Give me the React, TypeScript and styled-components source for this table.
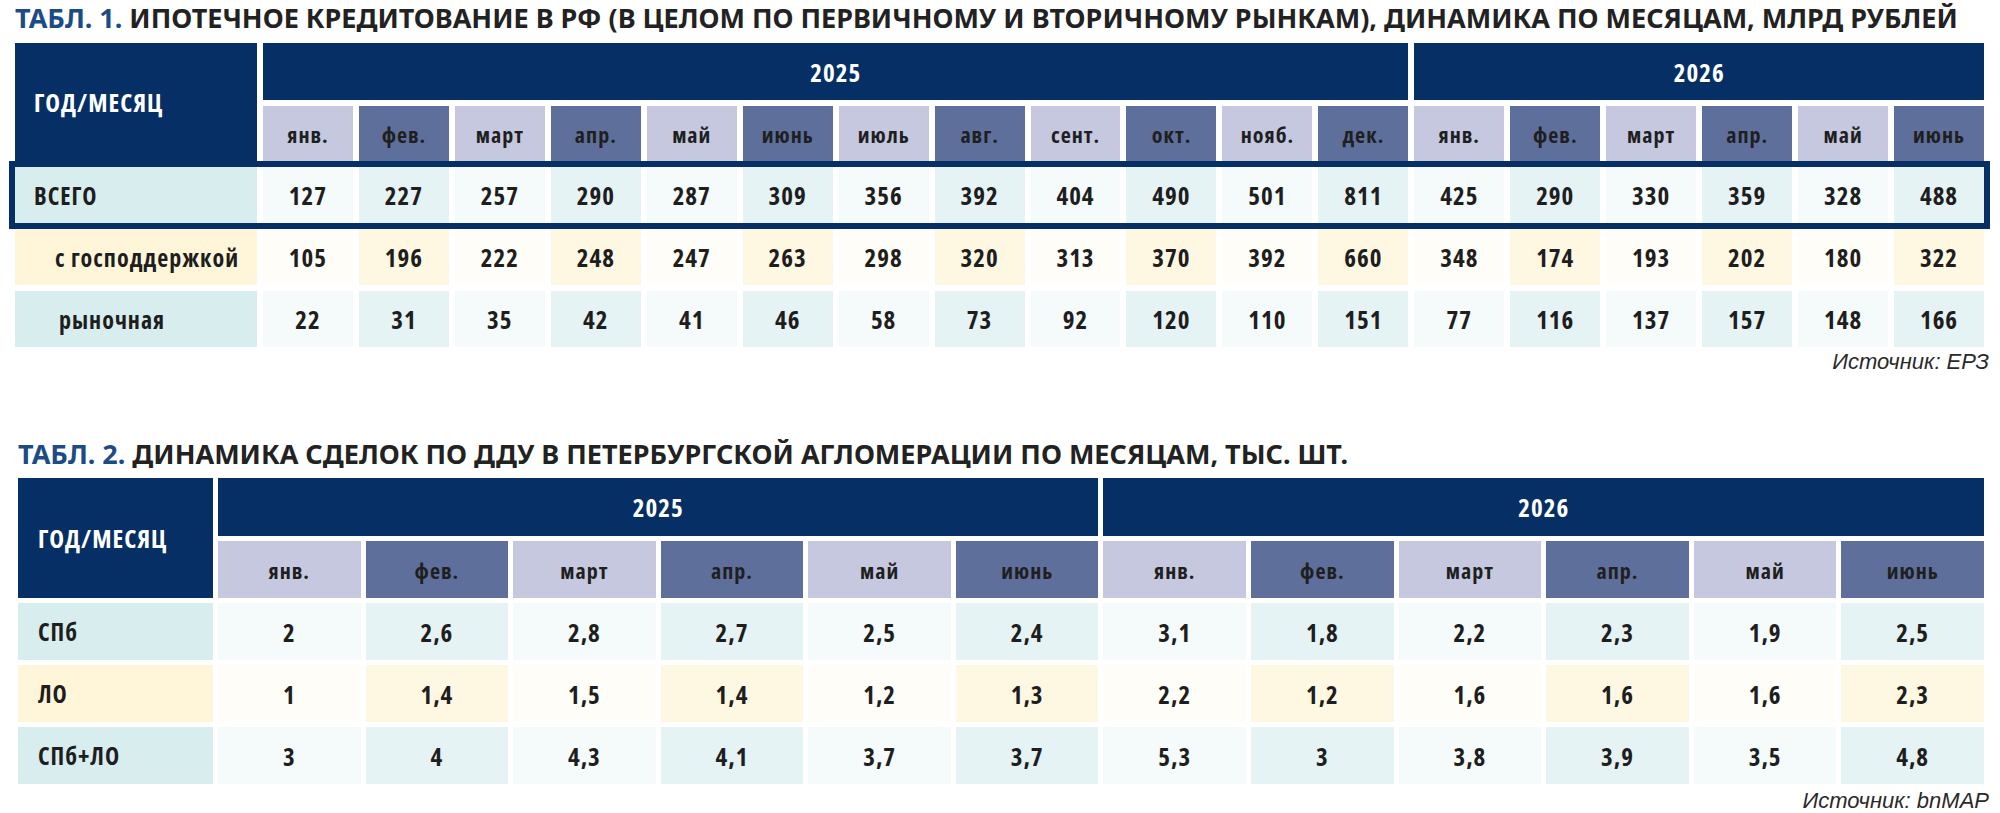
import React from 'react'
import styled, { createGlobalStyle } from 'styled-components'

const GlobalStyle = createGlobalStyle`
  html, body { margin: 0; padding: 0; background: #ffffff; }
  body { font-family: "Noto Sans", "DejaVu Sans", sans-serif; color: #1e1e1e; }
`

const NAVY = '#052f65'
// узкий шрифт ячеек (Open Sans Condensed + трекинг)
const CELL_FONT = '"Open Sans", "Noto Sans", sans-serif'

// данные таблиц
const months2025 = ['янв.', 'фев.', 'март', 'апр.', 'май', 'июнь', 'июль', 'авг.', 'сент.', 'окт.', 'нояб.', 'дек.']
const months2026 = ['янв.', 'фев.', 'март', 'апр.', 'май', 'июнь']

const mortgageRows = [
  { label: 'ВСЕГО', tone: 'teal', pad: 19, highlight: true, values: [127, 227, 257, 290, 287, 309, 356, 392, 404, 490, 501, 811, 425, 290, 330, 359, 328, 488] },
  { label: 'с господдержкой', tone: 'yellow', pad: 40, highlight: false, values: [105, 196, 222, 248, 247, 263, 298, 320, 313, 370, 392, 660, 348, 174, 193, 202, 180, 322] },
  { label: 'рыночная', tone: 'teal', pad: 44, highlight: false, values: [22, 31, 35, 42, 41, 46, 58, 73, 92, 120, 110, 151, 77, 116, 137, 157, 148, 166] },
]

const dealRows = [
  { label: 'СПб', tone: 'teal', pad: 20, highlight: false, values: ['2', '2,6', '2,8', '2,7', '2,5', '2,4', '3,1', '1,8', '2,2', '2,3', '1,9', '2,5'] },
  { label: 'ЛО', tone: 'yellow', pad: 20, highlight: false, values: ['1', '1,4', '1,5', '1,4', '1,2', '1,3', '2,2', '1,2', '1,6', '1,6', '1,6', '2,3'] },
  { label: 'СПб+ЛО', tone: 'teal', pad: 20, highlight: false, values: ['3', '4', '4,3', '4,1', '3,7', '3,7', '5,3', '3', '3,8', '3,9', '3,5', '4,8'] },
]

type Tone = 'teal' | 'yellow'

const labelBg: Record<Tone, string> = { teal: '#d8edee', yellow: '#fff6da' }
const cellBg: Record<Tone, [string, string]> = {
  teal: ['#f5fafb', '#e6f3f4'],
  yellow: ['#fffdf7', '#fef8e3'],
}

const Page = styled.div`
  display: flex;
  flex-direction: column;
  padding: 1px 11px 0 15px;
  width: 2000px;
  box-sizing: border-box;
`

const Section = styled.section<{ $shift: number; $top: number }>`
  display: flex;
  flex-direction: column;
  margin-left: ${(p) => p.$shift}px;
  margin-top: ${(p) => p.$top}px;
`

const Title = styled.h2`
  margin: 0;
  font-size: 27px;
  line-height: 34px;
  font-weight: 700;
  color: #222222;
  white-space: nowrap;
`

const TitleNo = styled.span`
  color: #1c4b86;
`

const Table = styled.div<{ $gap: number; $top: number }>`
  display: flex;
  flex-direction: column;
  gap: ${(p) => p.$gap}px;
  margin-top: ${(p) => p.$top}px;
  margin-right: 5px;
  font-family: ${CELL_FONT};
  font-stretch: condensed;
  letter-spacing: 1px;
`

const Grid = styled.div<{ $label: number; $cols: number; $gap: number }>`
  display: grid;
  grid-template-columns: ${(p) => p.$label}px repeat(${(p) => p.$cols}, minmax(0, 1fr));
  column-gap: ${(p) => p.$gap}px;
`

const HeadGrid = styled(Grid)<{ $rows: string }>`
  grid-template-rows: ${(p) => p.$rows};
  row-gap: ${(p) => p.$gap}px;
`

const HeadLabel = styled.div<{ $pad: number }>`
  grid-row: 1 / span 2;
  background: ${NAVY};
  color: #ffffff;
  font-size: 25px;
  font-weight: 700;
  display: flex;
  align-items: center;
  padding-left: ${(p) => p.$pad}px;
`

const YearCell = styled.div<{ $span: number }>`
  grid-column: span ${(p) => p.$span};
  background: ${NAVY};
  color: #ffffff;
  font-size: 25px;
  font-weight: 700;
  display: flex;
  align-items: center;
  justify-content: center;
`

const MonthCell = styled.div<{ $dark: boolean }>`
  background: ${(p) => (p.$dark ? '#5e6f9c' : '#c5c8de')};
  color: #1f1f1f;
  font-size: 22px;
  font-weight: 700;
  display: flex;
  align-items: center;
  justify-content: center;
`

const DataRow = styled(Grid)<{ $height: number; $highlight: boolean }>`
  height: ${(p) => p.$height}px;
  outline: ${(p) => (p.$highlight ? `6px solid ${NAVY}` : 'none')};
`

const RowLabel = styled.div<{ $tone: Tone; $pad: number }>`
  background: ${(p) => labelBg[p.$tone]};
  font-size: 24px;
  font-weight: 700;
  color: #1e1e1e;
  display: flex;
  align-items: center;
  padding-left: ${(p) => p.$pad}px;
`

const ValueCell = styled.div<{ $tone: Tone; $alt: boolean }>`
  background: ${(p) => cellBg[p.$tone][p.$alt ? 1 : 0]};
  font-size: 25px;
  font-weight: 700;
  color: #1e1e1e;
  display: flex;
  align-items: center;
  justify-content: center;
`

const Source = styled.div<{ $top: number }>`
  margin-top: ${(p) => p.$top}px;
  text-align: right;
  font-family: "Liberation Sans", Arial, sans-serif;
  font-size: 22px;
  line-height: 28px;
  font-style: italic;
  color: #2a2a2a;
`

type Row = { label: string; tone: string; pad: number; highlight: boolean; values: (number | string)[] }

type TableProps = {
  label: number
  gap: number
  headRows: string
  rowHeight: number
  labelPad: number
  top: number
  spans: [number, number]
  rows: Row[]
  months: string[]
}

const DataTable = ({ label, gap, headRows, rowHeight, labelPad, top, spans, rows, months }: TableProps) => (
  <Table $gap={gap} $top={top}>
    <HeadGrid $label={label} $cols={months.length} $gap={gap} $rows={headRows}>
      <HeadLabel $pad={labelPad}>ГОД/МЕСЯЦ</HeadLabel>
      <YearCell $span={spans[0]}>2025</YearCell>
      <YearCell $span={spans[1]}>2026</YearCell>
      {months.map((m, i) => (
        <MonthCell key={i} $dark={i % 2 === 1}>
          {m}
        </MonthCell>
      ))}
    </HeadGrid>
    {rows.map((row) => (
      <DataRow key={row.label} $label={label} $cols={months.length} $gap={gap} $height={rowHeight} $highlight={row.highlight}>
        <RowLabel $tone={row.tone as Tone} $pad={row.pad}>
          {row.label}
        </RowLabel>
        {row.values.map((v, i) => (
          <ValueCell key={i} $tone={row.tone as Tone} $alt={i % 2 === 1}>
            {v}
          </ValueCell>
        ))}
      </DataRow>
    ))}
  </Table>
)

export default function App() {
  return (
    <>
      <GlobalStyle />
      <Page>
        <Section $shift={0} $top={0}>
          <Title>
            <TitleNo>ТАБЛ. 1.</TitleNo> ИПОТЕЧНОЕ КРЕДИТОВАНИЕ В РФ (В ЦЕЛОМ ПО ПЕРВИЧНОМУ И ВТОРИЧНОМУ РЫНКАМ), ДИНАМИКА ПО МЕСЯЦАМ, МЛРД РУБЛЕЙ
          </Title>
          <DataTable
            label={242}
            gap={6}
            headRows="57px 55px"
            rowHeight={56}
            labelPad={19}
            top={8}
            spans={[12, 6]}
            rows={mortgageRows}
            months={[...months2025, ...months2026]}
          />
          <Source $top={1}>Источник: ЕРЗ</Source>
        </Section>

        <Section $shift={3} $top={61}>
          <Title>
            <TitleNo>ТАБЛ. 2.</TitleNo> ДИНАМИКА СДЕЛОК ПО ДДУ В ПЕТЕРБУРГСКОЙ АГЛОМЕРАЦИИ ПО МЕСЯЦАМ, ТЫС. ШТ.
          </Title>
          <DataTable
            label={195}
            gap={5}
            headRows="58px 57px"
            rowHeight={57}
            labelPad={20}
            top={7}
            spans={[6, 6]}
            rows={dealRows}
            months={[...months2025.slice(0, 6), ...months2026]}
          />
          <Source $top={3}>Источник: bnMAP</Source>
        </Section>
      </Page>
    </>
  )
}
